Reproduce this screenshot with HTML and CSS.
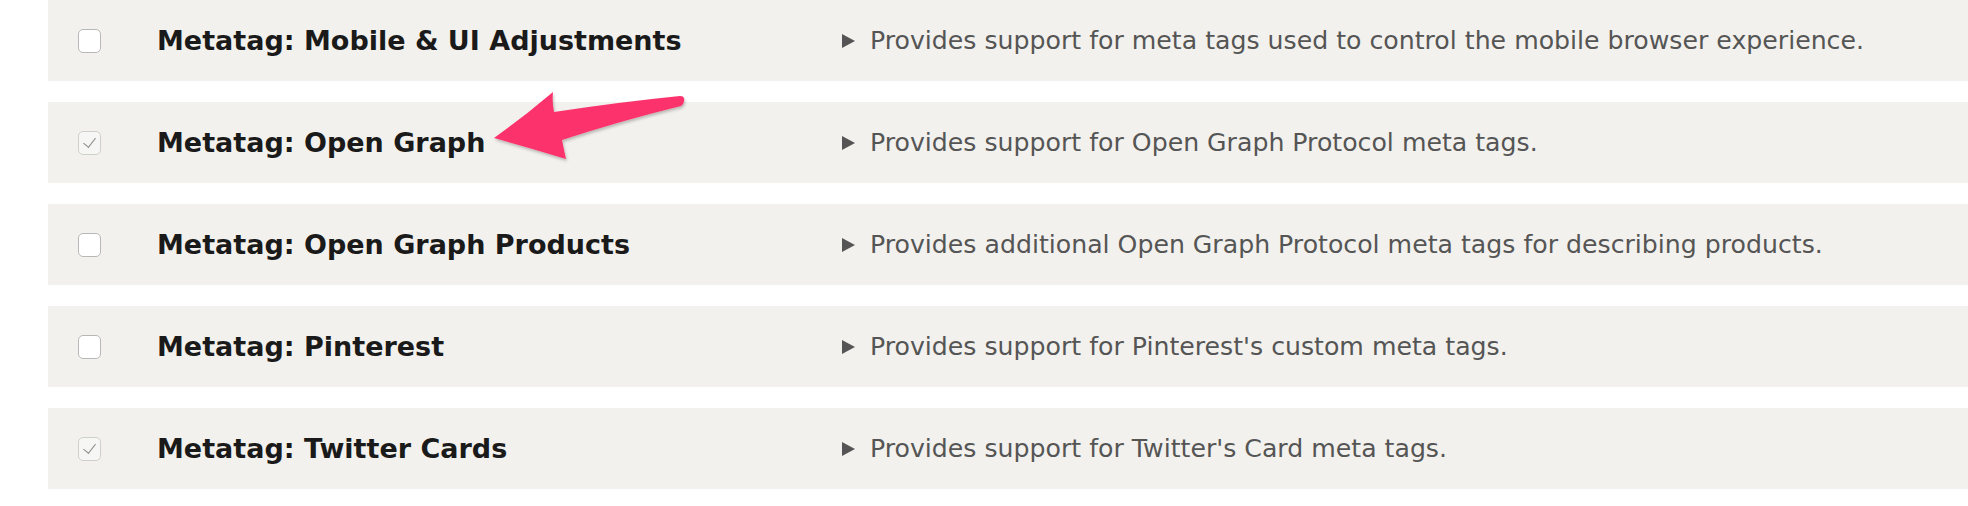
FILE: index.html
```html
<!DOCTYPE html>
<html lang="en">
<head>
  <meta charset="UTF-8">
  <title>Modules - Metatag</title>
  <link rel="stylesheet" href="styles.css">
</head>
<body>
  <div class="module-list">
    <div class="module-row">
      <span class="check"></span>
      <span class="module-name">Metatag: Mobile &amp; UI Adjustments</span>
      <span class="module-desc"><i class="toggle"></i>Provides support for meta tags used to control the mobile browser experience.</span>
    </div>
    <div class="module-row">
      <span class="check checked"></span>
      <span class="module-name">Metatag: Open Graph</span>
      <span class="module-desc"><i class="toggle"></i>Provides support for Open Graph Protocol meta tags.</span>
    </div>
    <div class="module-row">
      <span class="check"></span>
      <span class="module-name">Metatag: Open Graph Products</span>
      <span class="module-desc"><i class="toggle"></i>Provides additional Open Graph Protocol meta tags for describing products.</span>
    </div>
    <div class="module-row">
      <span class="check"></span>
      <span class="module-name">Metatag: Pinterest</span>
      <span class="module-desc"><i class="toggle"></i>Provides support for Pinterest's custom meta tags.</span>
    </div>
    <div class="module-row">
      <span class="check checked"></span>
      <span class="module-name">Metatag: Twitter Cards</span>
      <span class="module-desc"><i class="toggle"></i>Provides support for Twitter's Card meta tags.</span>
    </div>

    <!-- annotation arrow -->
    <svg class="callout" viewBox="0 0 220 90" width="220" height="90">
      <defs>
        <filter id="shade" x="-10%" y="-10%" width="130%" height="140%">
          <feDropShadow dx="1" dy="2" stdDeviation="1.5" flood-color="#000" flood-opacity="0.25"/>
        </filter>
      </defs>
      <path filter="url(#shade)" fill="#fb336c"
        d="M14 58 Q45 36 73 12 Q72 22 74 32 Q140 22 200 16 Q205 16 204 21 Q204 24 201 26 Q140 41 82 60 Q84 70 86 79 Q50 68 14 58 Z"/>
    </svg>
  </div>
</body>
</html>
```

FILE: styles.css
```css
body {
  margin: 0;
  background: #fff;
  font-family: "DejaVu Sans", "Liberation Sans", sans-serif;
}
.module-list {
  position: relative;
  padding-left: 48px;
}
.module-row {
  display: flex;
  align-items: center;
  height: 81px;
  margin-bottom: 21px;
  background-color: #f2f1ed;
}
.check {
  width: 21px;
  height: 22px;
  margin-left: 30px;
  margin-right: 56px;
  border: 1px solid #b8b8b8;
  border-radius: 5px;
  background: #fff;
  flex-shrink: 0;
  position: relative;
}
.check.checked {
  background: #f6f6f4;
  border-color: #cfcfcc;
}
.check.checked::after {
  content: "";
  position: absolute;
  left: 7px;
  top: 3px;
  width: 6px;
  height: 11px;
  border-right: 1.5px solid #8f8f8f;
  border-bottom: 1.5px solid #8f8f8f;
  transform: rotate(38deg);
}
.module-name {
  width: 685px;
  flex-shrink: 0;
  font-weight: bold;
  font-size: 27px;
  color: #1a1a1a;
}
.module-desc {
  display: flex;
  align-items: center;
  font-size: 25.2px;
  color: #555;
  white-space: nowrap;
}
.toggle {
  display: inline-block;
  width: 0;
  height: 0;
  border-left: 13px solid #555;
  border-top: 7px solid transparent;
  border-bottom: 7px solid transparent;
  margin-right: 15px;
}
.callout {
  position: absolute;
  left: 480px;
  top: 80px;
  overflow: visible;
}
```
